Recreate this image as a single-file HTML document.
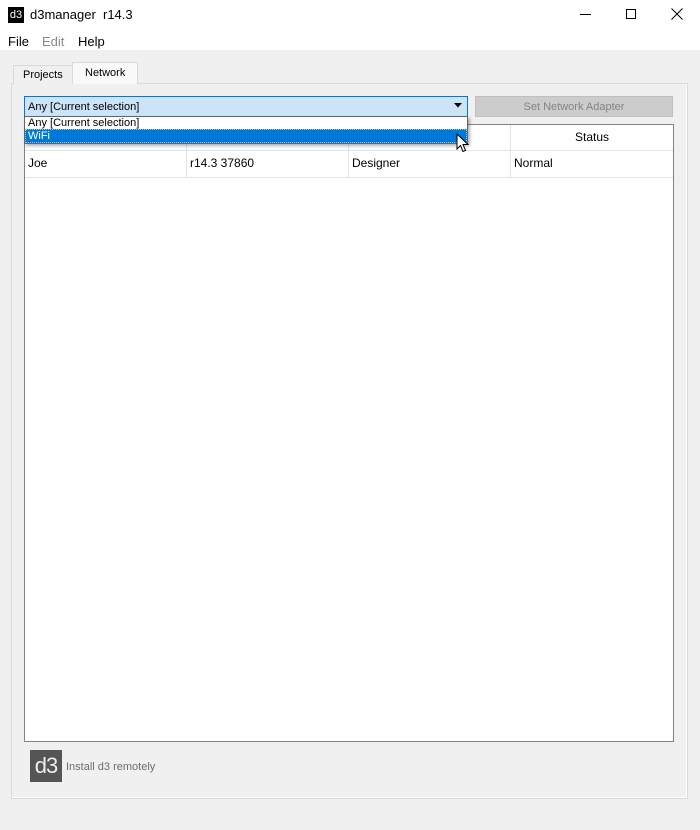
<!DOCTYPE html>
<html><head><meta charset="utf-8"><style>
*{margin:0;padding:0;box-sizing:border-box}
body{width:700px;height:830px;background:#f0f0f0;font-family:"Liberation Sans",sans-serif;font-size:12px;color:#000;position:relative;overflow:hidden}
.a{position:absolute}
</style></head><body>
<div class="a" style="left:0;top:0;width:700px;height:50px;background:#fff"></div>
<div class="a" style="left:8px;top:7px;width:16px;height:16px;background:#000;color:#fff;font-size:11px;line-height:16px;text-align:center">d3</div>
<div class="a" style="left:30px;top:7px;font-size:13px">d3manager&nbsp; r14.3</div>
<div class="a" style="left:580px;top:14px;width:11px;height:1px;background:#000"></div>
<div class="a" style="left:626px;top:9px;width:10px;height:10px;border:1px solid #000"></div>
<svg class="a" style="left:671px;top:8px" width="12" height="12"><path d="M0.5 0.5L11.5 11.5M11.5 0.5L0.5 11.5" stroke="#000" stroke-width="1"/></svg>
<div class="a" style="left:8px;top:34px;font-size:13px">File</div>
<div class="a" style="left:42px;top:34px;font-size:13px;color:#8a8a8a">Edit</div>
<div class="a" style="left:78px;top:34px;font-size:13px">Help</div>

<div class="a" style="left:11px;top:83px;width:677px;height:716px;border:1px solid #d9d9d9;background:#f0f0f0;box-shadow:inset -1px -1px 0 #fff"></div>
<div class="a" style="left:13px;top:65px;width:60px;height:19px;border:1px solid #d9d9d9;border-bottom:none;background:#f0f0f0;font-size:11px;padding:3px 0 0 9px">Projects</div>
<div class="a" style="left:72px;top:62px;width:66px;height:22px;border:1px solid #d9d9d9;border-bottom:none;background:#f9f9f9;font-size:11px;padding:4px 0 0 12px">Network</div>

<div class="a" style="left:24px;top:124px;width:650px;height:618px;border:1px solid #828282;background:#fff"></div>
<div class="a" style="left:25px;top:150px;width:648px;height:1px;background:#e3e3e3"></div>
<div class="a" style="left:25px;top:177px;width:648px;height:1px;background:#e3e3e3"></div>
<div class="a" style="left:186px;top:125px;width:1px;height:52px;background:#e3e3e3"></div>
<div class="a" style="left:348px;top:125px;width:1px;height:52px;background:#e3e3e3"></div>
<div class="a" style="left:510px;top:125px;width:1px;height:52px;background:#e3e3e3"></div>
<div class="a" style="left:511px;top:130px;width:162px;text-align:center">Status</div>
<div class="a" style="left:28px;top:156px">Joe</div>
<div class="a" style="left:190px;top:156px">r14.3 37860</div>
<div class="a" style="left:352px;top:156px">Designer</div>
<div class="a" style="left:514px;top:156px">Normal</div>

<div class="a" style="left:475px;top:96px;width:198px;height:21px;background:#cccccc;border:1px solid #bfbfbf;color:#838383;font-size:11px;text-align:center;line-height:21px">Set Network Adapter</div>

<div class="a" style="left:24px;top:96px;width:444px;height:21px;background:#cce4f7;border:1px solid #0078d7;font-size:11px;padding:4px 0 0 3px">Any [Current selection]</div>
<svg class="a" style="left:454px;top:103px" width="8" height="5"><path d="M0 0H8L4 4.5Z" fill="#000"/></svg>
<div class="a" style="left:24px;top:116px;width:444px;height:28px;background:#fff;border:1px solid #646464;box-shadow:2px 2px 3px rgba(0,0,0,.3)"></div>
<div class="a" style="left:28px;top:117px;font-size:11px">Any [Current selection]</div>
<div class="a" style="left:25px;top:129px;width:442px;height:14px;background:#0078d7;border:1px dotted #9cc9ef;color:#fff;font-size:11px;padding:0 0 0 2px;line-height:12px">WiFi</div>
<svg class="a" style="left:456px;top:133px" width="13" height="21"><path d="M1 1V16L4.5 12.5L7 18.5L9.5 17.5L7 11.5H12Z" fill="#fff" stroke="#000" stroke-width="1"/></svg>

<div class="a" style="left:30px;top:750px;width:32px;height:32px;background:#555;color:#eee;font-size:22px;line-height:32px;text-align:center;letter-spacing:-1px">d3</div>
<div class="a" style="left:66px;top:761px;font-size:11px;color:#6d6d6d">Install d3 remotely</div>
</body></html>
